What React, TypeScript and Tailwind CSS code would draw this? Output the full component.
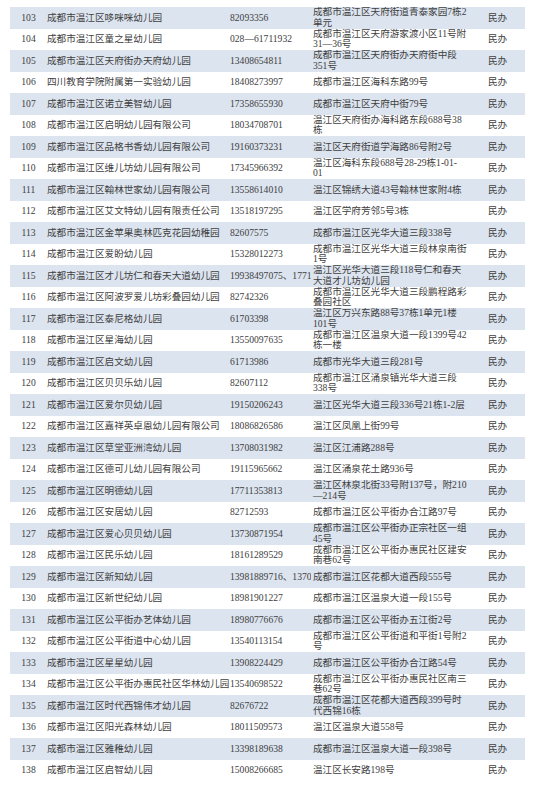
const rows: [number, string, string, string][] = [
  [103, '成都市温江区哆咪咪幼儿园', '82093356', '成都市温江区天府街道青泰家园7栋2\n单元'],
  [104, '成都市温江区童之星幼儿园', '028—61711932', '成都市温江区天府游家渡小区11号附\n31—36号'],
  [105, '成都市温江区天府街办天府幼儿园', '13408654811', '成都市温江区天府街办天府街中段\n351号'],
  [106, '四川教育学院附属第一实验幼儿园', '18408273997', '成都市温江区海科东路99号'],
  [107, '成都市温江区诺立美智幼儿园', '17358655930', '成都市温江区天府中街79号'],
  [108, '成都市温江区启明幼儿园有限公司', '18034708701', '温江区天府街办海科路东段688号38\n栋'],
  [109, '成都市温江区品格书香幼儿园有限公司', '19160373231', '温江区天府街道学海路86号附2号'],
  [110, '成都市温江区维儿坊幼儿园有限公司', '17345966392', '温江区海科东段688号28-29栋1-01-\n01'],
  [111, '成都市温江区翰林世家幼儿园有限公司', '13558614010', '温江区锦绣大道43号翰林世家附4栋'],
  [112, '成都市温江区艾文特幼儿园有限责任公司', '13518197295', '温江区学府芳邻5号3栋'],
  [113, '成都市温江区金苹果奥林匹克花园幼稚园', '82607575', '成都市温江区光华大道三段338号'],
  [114, '成都市温江区爱盼幼儿园', '15328012273', '成都市温江区光华大道三段林泉南街\n1号'],
  [115, '成都市温江区才儿坊仁和春天大道幼儿园', '19938497075、17713', '温江区光华大道三段118号仁和春天\n大道才儿坊幼儿园'],
  [116, '成都市温江区阿波罗爱儿坊彩叠园幼儿园', '82742326', '成都市温江区光华大道三段鹏程路彩\n叠园社区'],
  [117, '成都市温江区泰尼格幼儿园', '61703398', '温江区万兴东路88号37栋1单元1楼\n101号\n '],
  [118, '成都市温江区星海幼儿园', '13550097635', '成都市温江区温泉大道一段1399号42\n栋一楼'],
  [119, '成都市温江区启文幼儿园', '61713986', '成都市光华大道三段281号'],
  [120, '成都市温江区贝贝乐幼儿园', '82607112', '成都市温江区涌泉镇光华大道三段\n338号'],
  [121, '成都市温江区爱尔贝幼儿园', '19150206243', '温江区光华大道三段336号21栋1-2层'],
  [122, '成都市温江区嘉祥英卓恩幼儿园有限公司', '18086826586', '温江区凤凰上街99号'],
  [123, '成都市温江区草堂亚洲湾幼儿园', '13708031982', '温江区江浦路288号'],
  [124, '成都市温江区德可儿幼儿园有限公司', '19115965662', '温江区涌泉花土路936号'],
  [125, '成都市温江区明德幼儿园', '17711353813', '温江区林泉北街33号附137号，附210\n—214号'],
  [126, '成都市温江区安居幼儿园', '82712593', '成都市温江区公平街办合江路97号'],
  [127, '成都市温江区爱心贝贝幼儿园', '13730871954', '成都市温江区公平街办正宗社区一组\n45号'],
  [128, '成都市温江区民乐幼儿园', '18161289529', '成都市温江区公平街办惠民社区建安\n南巷62号'],
  [129, '成都市温江区新知幼儿园', '13981889716、1370', '成都市温江区花都大道西段555号'],
  [130, '成都市温江区新世纪幼儿园', '18981901227', '成都市温江区温泉大道一段155号'],
  [131, '成都市温江区公平街办艺体幼儿园', '18980776676', '成都市温江区公平街办五江街2号'],
  [132, '成都市温江区公平街道中心幼儿园', '13540113154', '成都市温江区公平街道和平街1号附2\n号'],
  [133, '成都市温江区星星幼儿园', '13908224429', '成都市温江区公平街办合江路54号'],
  [134, '成都市温江区公平街办惠民社区华林幼儿园', '13540698522', '成都市温江区公平街办惠民社区南三\n巷62号'],
  [135, '成都市温江区时代西锦伟才幼儿园', '82676722', '成都市温江区花都大道西段399号时\n代西锦16栋'],
  [136, '成都市温江区阳光森林幼儿园', '18011509573', '温江区温泉大道558号'],
  [137, '成都市温江区雅稚幼儿园', '13398189638', '成都市温江区温泉大道一段398号'],
  [138, '成都市温江区启智幼儿园', '15008266685', '温江区长安路198号'],
]

export default function App() {
  return (
    <div className="min-h-screen bg-white pt-[7px] font-['Liberation_Serif','Noto_Sans_CJK_SC',serif] text-[9.6px] text-[#404040]">
      <div className="ml-[10px] w-[515px]">
        {rows.map(([no, name, phone, addr], idx) => (
          <div
            key={no}
            className={`grid h-[21.5px] grid-cols-[37px_183px_81px_177px_37px] items-center ${idx % 2 === 0 ? 'bg-[#dce4ef]' : 'bg-white'}`}
          >
            <div className="text-center">{no}</div>
            <div className="whitespace-nowrap">{name}</div>
            <div className="overflow-hidden whitespace-nowrap">{phone}</div>
            <div className="flex h-full items-center overflow-hidden whitespace-pre-line pl-[2px] leading-[10.5px]">
              {addr}
            </div>
            <div>民办</div>
          </div>
        ))}
      </div>
    </div>
  )
}
